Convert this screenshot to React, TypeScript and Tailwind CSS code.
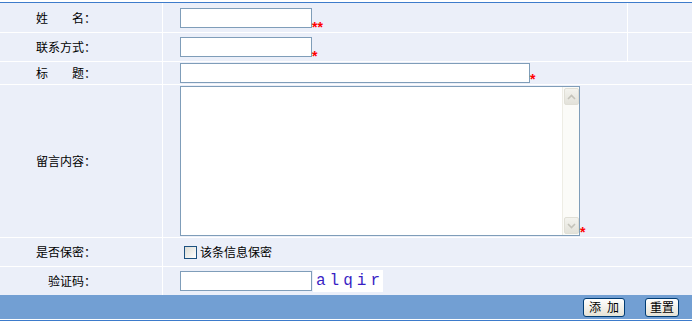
import React from 'react';

const cjk = "font-['SimSun','Noto_Sans_CJK_SC',sans-serif]";

function Label({ children }: { children: React.ReactNode }) {
  return (
    <div className="bg-[#ebeff9] flex items-center justify-end pr-[66px] text-[12px] text-black whitespace-pre">
      {children}
    </div>
  );
}

function Star({ n = 1 }: { n?: number }) {
  return (
    <span className="text-[#ff0000] text-[14px] font-bold leading-none self-end mb-[-2px] font-['Liberation_Sans',sans-serif]">
      {'*'.repeat(n)}
    </span>
  );
}

function Input({ w }: { w: string }) {
  return <input type="text" className={`${w} h-[20px] bg-white border border-[#7f9db9] outline-none px-1 text-[12px]`} />;
}

function Chevron({ up }: { up?: boolean }) {
  return (
    <div className="h-[17px] w-[15px] rounded-[2px] bg-gradient-to-b from-[#f3f3ee] to-[#e3e2da] border border-[#e0dfd6] flex items-center justify-center">
      <svg width="9" height="6" viewBox="0 0 9 6">
        <path d={up ? 'M1 5 L4.5 1.5 L8 5' : 'M1 1 L4.5 4.5 L8 1'} fill="none" stroke="#c4c3ba" strokeWidth="1.6" />
      </svg>
    </div>
  );
}

const btn =
  'h-[19px] rounded-[3px] border border-[#003c74] bg-gradient-to-b from-white to-[#e6e3d6] text-[12px] text-black leading-none flex items-center justify-center';

export default function App() {
  return (
    <div className={`w-[692px] h-[326px] bg-white pt-[2px] ${cjk}`}>
      <div className="h-px bg-[#3d7bcb]" />
      <div className="grid grid-cols-[162px_464px_1fr] grid-rows-[29px_28px_22px_152px_28px_28px] gap-px bg-white">
        <Label>{'姓　　名：'}</Label>
        <div className="bg-[#ebeff9] flex items-center pl-[17px]">
          <Input w="w-[132px]" />
          <Star n={2} />
        </div>
        <div className="bg-[#ebeff9]" />

        <Label>联系方式：</Label>
        <div className="bg-[#ebeff9] flex items-center pl-[17px]">
          <Input w="w-[132px]" />
          <Star />
        </div>
        <div className="bg-[#ebeff9]" />

        <Label>{'标　　题：'}</Label>
        <div className="col-span-2 bg-[#ebeff9] flex items-center pl-[17px]">
          <Input w="w-[350px]" />
          <Star />
        </div>

        <Label>留言内容：</Label>
        <div className="col-span-2 bg-[#ebeff9] flex items-center pl-[17px]">
          <div className="w-[400px] h-[150px] border border-[#7f9db9] bg-white flex">
            <textarea className="flex-1 resize-none outline-none p-1 text-[12px] overflow-hidden" />
            <div className="w-[17px] bg-[#fbfbf8] border-l border-[#eeede5] flex flex-col justify-between items-center py-[1px]">
              <Chevron up />
              <Chevron />
            </div>
          </div>
          <Star />
        </div>

        <Label>是否保密：</Label>
        <div className="col-span-2 bg-[#ebeff9] flex items-center pl-[21px] text-[12px] text-black">
          <span className="w-[13px] h-[13px] border border-[#1c5180] bg-gradient-to-br from-[#dcdcd5] to-white mr-[3px]" />
          该条信息保密
        </div>

        <Label>验证码：</Label>
        <div className="col-span-2 bg-[#ebeff9] flex items-center pl-[17px]">
          <Input w="w-[132px]" />
          <div className="ml-[1px] w-[70px] h-[22px] bg-white flex items-center pl-[3px] font-['Liberation_Mono',monospace] text-[16px] tracking-[4px] text-[#3a1fc4]">
            alqir
          </div>
        </div>
      </div>
      <div className="h-[24px] bg-[#729fd3] flex items-center justify-end gap-[20px] pr-[13px]">
        <button className={`${btn} w-[42px] gap-[6px]`}>
          <span>添</span>
          <span>加</span>
        </button>
        <button className={`${btn} w-[34px]`}>重置</button>
      </div>
      <div className="h-px bg-white" />
      <div className="h-px bg-[#3d7bcb]" />
    </div>
  );
}
